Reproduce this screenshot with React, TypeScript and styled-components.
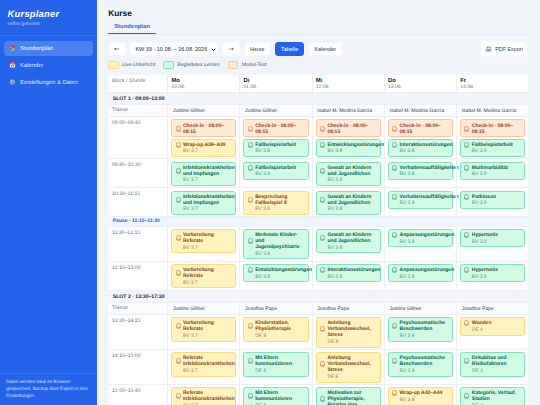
import React, { useState } from 'react'
import styled, { createGlobalStyle } from 'styled-components'

const GlobalStyle = createGlobalStyle`
* {
    box-sizing: border-box;
}
body {
    margin: 0;
    background: #f1f5f9;
    color: #0f172a;
    font-family: "Liberation Sans", Arial, sans-serif;
    font-size: 5.25px;
    text-rendering: geometricPrecision;
}
button {
    font-family: inherit;
    margin: 0;
}
`

const Layout = styled.div`
display: flex;
width: 100%;
height: 405px;
overflow: hidden;
`
const Sidebar = styled.aside`
flex: none;
width: 97px;
height: 100%;
display: flex;
flex-direction: column;
background: #2563eb;
color: #fff;
`
const Brand = styled.div`
height: 36px;
padding: 8px 7.6px 0;
border-bottom: 1px solid #3a72ed;
`
const BrandName = styled.div`
font-size: 9.4px;
line-height: 11px;
font-weight: bold;
font-style: italic;
letter-spacing: 0.22px;
`
const BrandSub = styled.div`
margin-top: 2.7px;
font-size: 4.75px;
line-height: 6px;
color: #bdd0f9;
`
const Nav = styled.nav`
flex: 1;
display: flex;
flex-direction: column;
gap: 2px;
padding: 5px 4px;
`
const NavItem = styled.a<{ $active?: boolean }>`
display: flex;
align-items: center;
gap: 3.4px;
height: 15px;
padding: 1px 5.6px 0;
border-radius: 3.5px;
font-size: 5.9px;
color: ${p => p.$active ? '#fff' : '#dfe9fd'};
background: ${p => p.$active ? '#4c7fef' : 'transparent'};
`
const NavIcon = styled.span`
width: 7px;
font-size: 5.6px;
line-height: 7px;
text-align: center;
white-space: nowrap;
`
const SidebarNote = styled.div`
height: 32.5px;
padding: 5.5px 6px 0;
border-top: 1px solid #3a72ed;
font-size: 4.68px;
line-height: 6.9px;
color: #d3e0fc;
white-space: nowrap;
`

const Main = styled.main`
flex: 1;
min-width: 0;
padding: 8px 11.7px 0 11.2px;
`
const Title = styled.h1`
margin: 0;
font-size: 8.35px;
line-height: 10px;
font-weight: bold;
`
const Tabs = styled.div`
display: flex;
height: 16px;
margin-top: 0.5px;
border-bottom: 1px solid #e6ebf2;
`
const Tab = styled.div`
height: 15.3px;
padding: 5.2px 6px 0;
border-bottom: 1px solid #2563eb;
font-size: 5.9px;
line-height: 7px;
font-weight: bold;
color: #2f6aec;
`

const Toolbar = styled.div`
display: flex;
align-items: center;
gap: 4px;
height: 16px;
margin-top: 6.5px;
`
const ToolButton = styled.button<{ $active?: boolean; $width: number }>`
display: flex;
align-items: center;
justify-content: center;
width: ${p => p.$width}px;
height: 13.6px;
padding: 0;
border: 1px solid ${p => p.$active ? '#2563eb' : '#f5f7fb'};
border-radius: 3px;
font-size: 5.4px;
white-space: nowrap;
color: ${p => p.$active ? '#fff' : '#334155'};
background: ${p => p.$active ? '#2563eb' : '#fff'};
`
const ArrowButton = styled(ToolButton)`
font-size: 6.6px;
font-family: "DejaVu Sans", sans-serif;
`
const WeekButton = styled(ToolButton)`
justify-content: space-between;
padding: 0 0.8px 0 4.8px;
font-size: 5.5px;
color: #1e293b;
`
const ExportButton = styled(ToolButton)`
height: 16px;
margin-left: auto;
gap: 3px;
`

const Legend = styled.div`
display: flex;
align-items: center;
height: 8px;
margin-top: 4px;
gap: 8px;
`
const LegendItem = styled.div`
display: flex;
align-items: center;
gap: 3.3px;
font-size: 5.1px;
color: #475569;
white-space: nowrap;
`

const COLORS: Record<Kind, { bg: string; border: string; title: string; sub: string }> = {
    live: { bg: '#fef3bd', border: '#f8dc7c', title: '#85400f', sub: '#ab8049' },
    guided: { bg: '#d1fae5', border: '#80e2bc', title: '#075f46', sub: '#519b83' },
    test: { bg: '#ffebd5', border: '#fbc69a', title: '#9f3714', sub: '#b96a4c' },
}

const Swatch = styled.span<{ $kind: Kind }>`
width: 10.7px;
height: 7.4px;
border-radius: 1.6px;
border: 1px solid ${p => COLORS[p.$kind].border};
background: ${p => COLORS[p.$kind].bg};
`

const Table = styled.div`
margin-top: 6.2px;
border-radius: 3px 3px 0 0;
background: #fff;
overflow: hidden;
`
const Row = styled.div<{ $tint?: boolean }>`
display: grid;
grid-template-columns: 59.1px repeat(5, minmax(0, 1fr));
border-bottom: 1px solid #ecf0f5;
background: ${p => p.$tint ? '#f9fbfd' : '#fff'};
`
const HeadLabel = styled.div`
height: 16.6px;
padding: 2.5px 3.8px;
font-size: 5.2px;
line-height: 6px;
color: #64748b;
`
const DayHead = styled.div`
padding: 3px 3.1px 0;
border-left: 1px solid #ecf0f5;
font-size: 5px;
line-height: 6px;
color: #64748b;
`
const DayName = styled.div`
font-size: 5.9px;
line-height: 6.2px;
font-weight: bold;
color: #0f172a;
`
const Band = styled.div<{ $pause?: boolean }>`
height: ${p => p.$pause ? 9.4 : 11.9}px;
padding: 0 4.6px;
border-bottom: 1px solid #ecf0f5;
font-size: ${p => p.$pause ? 5 : 5.15}px;
line-height: ${p => p.$pause ? 9.4 : 12}px;
font-weight: bold;
color: ${p => p.$pause ? '#2563eb' : '#0f172a'};
background: ${p => p.$pause ? '#eff6ff' : '#f1f5f9'};
`
const TrainerLabel = styled.div`
height: 11.5px;
padding: 2.5px 3.8px;
font-size: 5.1px;
line-height: 6px;
color: #64748b;
`
const TrainerCell = styled.div`
padding: 3.3px 4.6px 0;
border-left: 1px solid #ecf0f5;
font-size: 5.05px;
line-height: 6px;
color: #334155;
white-space: nowrap;
`
const TimeCell = styled.div`
padding: 2.9px 3.8px;
font-size: 5.15px;
line-height: 6px;
color: #64748b;
`
const DayCell = styled.div`
display: flex;
flex-direction: column;
gap: 1.5px;
padding: 2.3px 3px 1.5px;
border-left: 1px solid #ecf0f5;
`
const Card = styled.div<{ $kind: Kind }>`
padding: 2.1px 0 1.5px 3.4px;
border: 1px solid ${p => COLORS[p.$kind].border};
border-radius: 2.5px;
background: ${p => COLORS[p.$kind].bg};
color: ${p => COLORS[p.$kind].title};
`
const CardHead = styled.div`
display: flex;
align-items: center;
gap: 2.3px;
`
const CardTitle = styled.div`
flex: 1;
min-width: 0;
font-size: 5.02px;
line-height: 6px;
font-weight: bold;
white-space: pre;
`
const CardSub = styled.div<{ $kind: Kind }>`
margin: 1.5px 0 -0.9px;
padding-left: 7.3px;
font-size: 4.95px;
line-height: 6px;
color: ${p => COLORS[p.$kind].sub};
`

type Kind = 'live' | 'guided' | 'test'
type Lesson = { kind: Kind; title: string; sub?: string }
type Slot = { label: string; trainers: string[]; rows: Array<{ time: string; days: Lesson[][] } | string> }

const live = (title: string, sub: string): Lesson => ({ kind: 'live', title, sub })
const guided = (title: string, sub: string): Lesson => ({ kind: 'guided', title, sub })
const checkIn: Lesson = { kind: 'test', title: 'Check-in · 08:00–\n08:15' }

const days = [['Mo', '10.08.'], ['Di', '11.08.'], ['Mi', '12.08.'], ['Do', '13.08.'], ['Fr', '14.08.']]

const slots: Slot[] = [
    {
        label: 'SLOT 1 · 09:00–13:00',
        trainers: ['Justine Gillner', 'Justine Gillner', 'Isabel M. Medina Garcia', 'Isabel M. Medina Garcia', 'Isabel M. Medina Garcia'],
        rows: [
            {
                time: '09:00–09:45',
                days: [
                    [checkIn, live('Wrap-up A38–A39', 'BV 3.7')],
                    [checkIn, guided('Fallbeispielarbeit', 'BV 3.8')],
                    [checkIn, guided('Entwicklungsstörungen', 'BV 3.8')],
                    [checkIn, guided('Interaktionsstörungen', 'BV 3.8')],
                    [checkIn, guided('Fallbeispielarbeit', 'BV 3.9')],
                ],
            },
            {
                time: '09:45–10:30',
                days: [
                    [guided('Infektionskrankheiten\nund Impfungen', 'BV 3.7')],
                    [guided('Fallbeispielarbeit', 'BV 3.8')],
                    [guided('Gewalt an Kindern\nund Jugendlichen', 'BV 3.8')],
                    [guided('Verhaltensauffälligkeiten', 'BV 3.8')],
                    [guided('Multimorbidität', 'BV 3.9')],
                ],
            },
            {
                time: '10:30–11:15',
                days: [
                    [guided('Infektionskrankheiten\nund Impfungen', 'BV 3.7')],
                    [live('Besprechung\nFallbeispiel 8', 'BV 3.8')],
                    [guided('Gewalt an Kindern\nund Jugendlichen', 'BV 3.8')],
                    [guided('Verhaltensauffälligkeiten', 'BV 3.8')],
                    [guided('Parkinson', 'BV 3.9')],
                ],
            },
            'Pause · 11:15–11:30',
            {
                time: '11:30–12:15',
                days: [
                    [live('Vorbereitung\nReferate', 'BV 3.7')],
                    [guided('Merkmale Kinder-\nund\nJugendpsychiatrie', 'BV 3.8')],
                    [guided('Gewalt an Kindern\nund Jugendlichen', 'BV 3.8')],
                    [guided('Anpassungsstörungen', 'BV 3.8')],
                    [guided('Hypertonie', 'BV 3.9')],
                ],
            },
            {
                time: '12:15–13:00',
                days: [
                    [live('Vorbereitung\nReferate', 'BV 3.7')],
                    [guided('Entwicklungsstörungen', 'BV 3.8')],
                    [guided('Interaktionsstörungen', 'BV 3.8')],
                    [guided('Anpassungsstörungen', 'BV 3.8')],
                    [guided('Hypertonie', 'BV 3.9')],
                ],
            },
        ],
    },
    {
        label: 'SLOT 2 · 13:30–17:30',
        trainers: ['Justine Gillner', 'Josefine Pape', 'Josefine Pape', 'Justine Gillner', 'Josefine Pape'],
        rows: [
            {
                time: '13:30–14:15',
                days: [
                    [live('Vorbereitung\nReferate', 'BV 3.7')],
                    [live('Kinderstation,\nPhysiotherapie', 'DE 8')],
                    [live('Anleitung\nVerbandswechsel,\nStress', 'DE 8')],
                    [guided('Psychosomatische\nBeschwerden', 'BV 3.8')],
                    [live('Wunden', 'DE 4')],
                ],
            },
            {
                time: '14:15–15:00',
                days: [
                    [live('Referate\nInfektionskrankheiten', 'BV 3.7')],
                    [guided('Mit Eltern\nkommunizieren', 'DE 8')],
                    [live('Anleitung\nVerbandswechsel,\nStress', 'DE 8')],
                    [guided('Psychosomatische\nBeschwerden', 'BV 3.8')],
                    [guided('Dekubitus und\nRisikofaktoren', 'DE 4')],
                ],
            },
            {
                time: '15:00–15:45',
                days: [
                    [live('Referate\nInfektionskrankheiten', 'BV 3.7')],
                    [guided('Mit Eltern\nkommunizieren', 'DE 8')],
                    [guided('Motivation zur\nPhysiotherapie,\nRelative Hse', 'DE 8')],
                    [live('Wrap-up A42–A44', 'BV 3.8')],
                    [guided('Kategorie, Verlauf,\nStadien', 'DE 4')],
                ],
            },
        ],
    },
]

function BookIcon() {
    return (
        <svg width="5" height="6" viewBox="0 0 15 18" fill="none" stroke="currentColor" strokeWidth="1.5" opacity="0.8">
            <rect x="2" y="2" width="11" height="14" rx="2" />
            <path d="M2 13H13" />
        </svg>
    )
}

function Chevron() {
    return (
        <svg width="5" height="5" viewBox="0 0 10 10" fill="none" stroke="#0f172a" strokeWidth="2">
            <path d="M1.5 3.5L5 7L8.5 3.5" />
        </svg>
    )
}

function LessonCard({ lesson }: { lesson: Lesson }) {
    return (
        <Card $kind={lesson.kind}>
            <CardHead>
                <BookIcon />
                <CardTitle>{lesson.title}</CardTitle>
            </CardHead>
            {lesson.sub && <CardSub $kind={lesson.kind}>{lesson.sub}</CardSub>}
        </Card>
    )
}

function Timetable() {
    return (
        <Table>
            <Row>
                <HeadLabel>Block / Stunde</HeadLabel>
                {days.map(([name, date]) => (
                    <DayHead key={name}>
                        <DayName>{name}</DayName>
                        {date}
                    </DayHead>
                ))}
            </Row>
            {slots.map(slot => (
                <React.Fragment key={slot.label}>
                    <Band>{slot.label}</Band>
                    <Row $tint>
                        <TrainerLabel>Trainer</TrainerLabel>
                        {slot.trainers.map((t, i) => <TrainerCell key={i}>{t}</TrainerCell>)}
                    </Row>
                    {slot.rows.map(row => typeof row === 'string' ? (
                        <Band key={row} $pause>{row}</Band>
                    ) : (
                        <Row key={row.time}>
                            <TimeCell>{row.time}</TimeCell>
                            {row.days.map((lessons, i) => (
                                <DayCell key={i}>
                                    {lessons.map(l => <LessonCard key={l.title} lesson={l} />)}
                                </DayCell>
                            ))}
                        </Row>
                    ))}
                </React.Fragment>
            ))}
        </Table>
    )
}

function App() {
    const [view, setView] = useState('Tabelle')

    return (
        <Layout>
            <GlobalStyle />
            <Sidebar>
                <Brand>
                    <BrandName>Kursplaner</BrandName>
                    <BrandSub>selbst gehostet</BrandSub>
                </Brand>
                <Nav>
                    <NavItem $active><NavIcon>📚</NavIcon>Stundenplan</NavItem>
                    <NavItem><NavIcon>📅</NavIcon>Kalender</NavItem>
                    <NavItem><NavIcon>⚙️</NavIcon>Einstellungen &amp; Daten</NavItem>
                </Nav>
                <SidebarNote>
                    Daten werden lokal im Browser<br />
                    gespeichert. Backup über Export in den<br />
                    Einstellungen.
                </SidebarNote>
            </Sidebar>
            <Main>
                <Title>Kurse</Title>
                <Tabs>
                    <Tab>Stundenplan</Tab>
                </Tabs>
                <Toolbar>
                    <ArrowButton $width={17.4}>←</ArrowButton>
                    <WeekButton $width={88.6}>KW 33 · 10.08. – 16.08. 2026<Chevron /></WeekButton>
                    <ArrowButton $width={17.6}>→</ArrowButton>
                    <ToolButton $width={27}>Heute</ToolButton>
                    <ToolButton $width={29.7} $active={view === 'Tabelle'} onClick={() => setView('Tabelle')}>Tabelle</ToolButton>
                    <ToolButton $width={33.6} $active={view === 'Kalender'} onClick={() => setView('Kalender')}>Kalender</ToolButton>
                    <ExportButton $width={48.4}><span>🖨</span>PDF Export</ExportButton>
                </Toolbar>
                <Legend>
                    <LegendItem><Swatch $kind="live" />Live-Unterricht</LegendItem>
                    <LegendItem><Swatch $kind="guided" />Begleitetes Lernen</LegendItem>
                    <LegendItem><Swatch $kind="test" />Modul-Test</LegendItem>
                </Legend>
                <Timetable />
            </Main>
        </Layout>
    )
}

export default App
